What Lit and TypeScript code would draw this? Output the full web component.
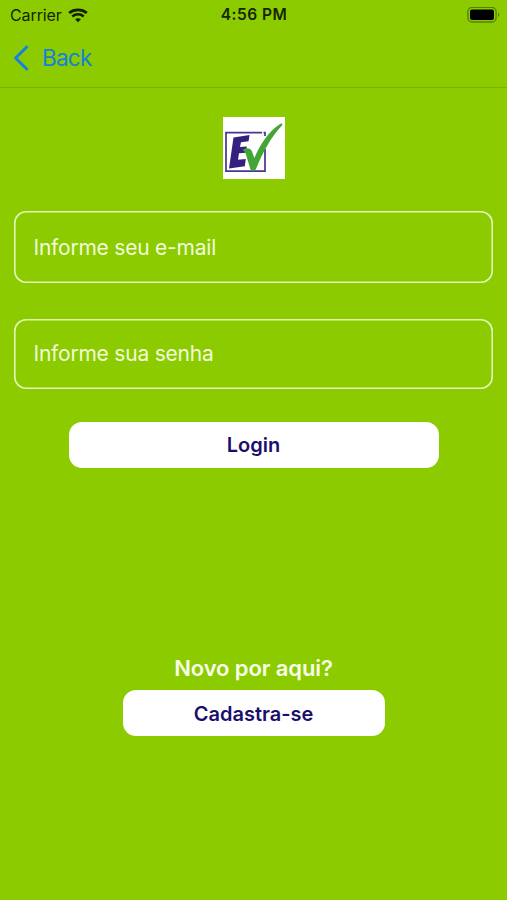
import { LitElement, html, css } from "lit";
import { customElement } from "lit/decorators.js";

@customElement("app-root")
export class AppRoot extends LitElement {
  static styles = css`
    :host {
      display: flex;
      flex-direction: column;
      height: 900px;
      background: #8bcb00;
      font-family: Inter, "Liberation Sans", sans-serif;
      overflow: hidden;
    }
    * { box-sizing: border-box; }
    svg { display: block; }
    .status {
      display: grid;
      grid-template-columns: 1fr auto 1fr;
      align-items: center;
      height: 30px;
      padding: 0 7px 0 10px;
      color: #142600;
      font-size: 16px;
      line-height: 20px;
    }
    .carrier { display: flex; align-items: center; gap: 6px; letter-spacing: -0.1px; }
    .time { font-weight: 600; font-size: 15.5px; letter-spacing: 0.5px; margin-right: 2px; }
    .battery { justify-self: end; }
    .nav {
      display: flex;
      align-items: center;
      gap: 12px;
      height: 58px;
      padding: 0 0 1px 13px;
      border-bottom: 1px solid #79b200;
      color: #1482d8;
      font-size: 22.5px;
      line-height: 28px;
      letter-spacing: -0.75px;
    }
    .content {
      display: flex;
      flex-direction: column;
      align-items: center;
      padding: 29px 14px 0;
    }
    .logo { width: 62px; height: 62px; }
    .field {
      width: 479px;
      height: 72px;
      margin: 32px 0 0;
      padding: 0 20px 0 19.5px;
      border: 0;
      border-radius: 12px;
      box-shadow: inset 0 0 0 1.6px #e4f6b9;
      background: transparent;
      color: #f1fbdb;
      font: 400 21px/28px Inter, "Liberation Sans", sans-serif;
      letter-spacing: -0.22px;
      outline: none;
    }
    .field::placeholder { color: #f1fbdb; opacity: 1; }
    .password { height: 70px; margin-top: 36px; padding-bottom: 2px; }
    .button {
      width: 370px;
      height: 46px;
      margin: 32.5px 0 0;
      padding: 0;
      border: 0;
      border-radius: 13px;
      background: #fff;
      color: #1b0f6b;
      font: 600 20px/26px Inter, "Liberation Sans", sans-serif;
    }
    .prompt {
      margin-top: 186.5px;
      color: #f8ffe8;
      font-size: 22px;
      font-weight: 600;
      line-height: 28px;
      letter-spacing: -0.1px;
    }
    .register { width: 262px; margin-top: 8px; padding-top: 2px; }
  `;

  render() {
    return html`
      <div class="status">
        <div class="carrier">
          <span>Carrier</span>
          <svg width="20" height="15" viewBox="0 0 20 15" fill="none" stroke="#102000">
            <path d="M1.2 5C6 .8 14 .8 18.8 5" stroke-width="2.8" />
            <path d="M4.3 8.4c3.3-2.8 8.100-2.8 11.400 0" stroke-width="2.6" />
            <path d="M7.100 11.300c1.600-1.400 4.200-1.400 5.800 0L10 14.200z" fill="#102000" stroke="none" />
          </svg>
        </div>
        <span class="time">4:56 PM</span>
        <svg class="battery" width="33" height="17" viewBox="0 0 33 17">
          <rect x=".9" y=".4" width="28.2" height="14.6" rx="4.3" fill="none" stroke="#578000" stroke-width="1.3" />
          <rect x="3" y="2.5" width="24" height="10.4" rx="2" fill="#000" />
          <path d="M31 5.5v4.500c1.800-.7 1.800-3.800 0-4.500" fill="#578000" />
        </svg>
      </div>
      <div class="nav">
        <svg width="17" height="28" viewBox="0 0 17 28" fill="none" stroke="#1482e0" stroke-width="3" stroke-linecap="round" stroke-linejoin="round">
          <path d="M13.7 3 2.6 14l11.100 11" />
        </svg>
        <span>Back</span>
      </div>
      <div class="content">
        <svg class="logo" viewBox="0 0 62 62">
          <rect width="62" height="62" fill="#fff" />
          <path d="M39 15.700H3v38.400h39V32M42 19v-3.300h-1.500" fill="none" stroke="#48358d" stroke-width="1.700" />
          <path d="M10.500 20.500 26.500 18 25.600 24.200 18 25.200 17 30 23.800 29.400 22.900 35.700 16 36.300 15 42.800 22.800 42 21.800 49.300 6 51.500z" fill="#36207f" />
          <path d="M19.500 33c3-2.700 8-2.500 9.500 1.500l2.400 6.500C36.500 28.500 46 13.500 57.500 6.700c1.300-.8 2.500.5 1.500 1.700C48.500 19.500 39.800 34.500 33 52c-1 2.300-4.500 2.300-5.700 0L23 37.500c-.6-2.100-1.700-3.400-3.500-4.500z" fill="#42a536" />
        </svg>
        <input class="field" type="email" placeholder="Informe seu e-mail" />
        <input class="field password" type="password" placeholder="Informe sua senha" />
        <button class="button">Login</button>
        <div class="prompt">Novo por aqui?</div>
        <button class="button register">Cadastra-se</button>
      </div>
    `;
  }
}
